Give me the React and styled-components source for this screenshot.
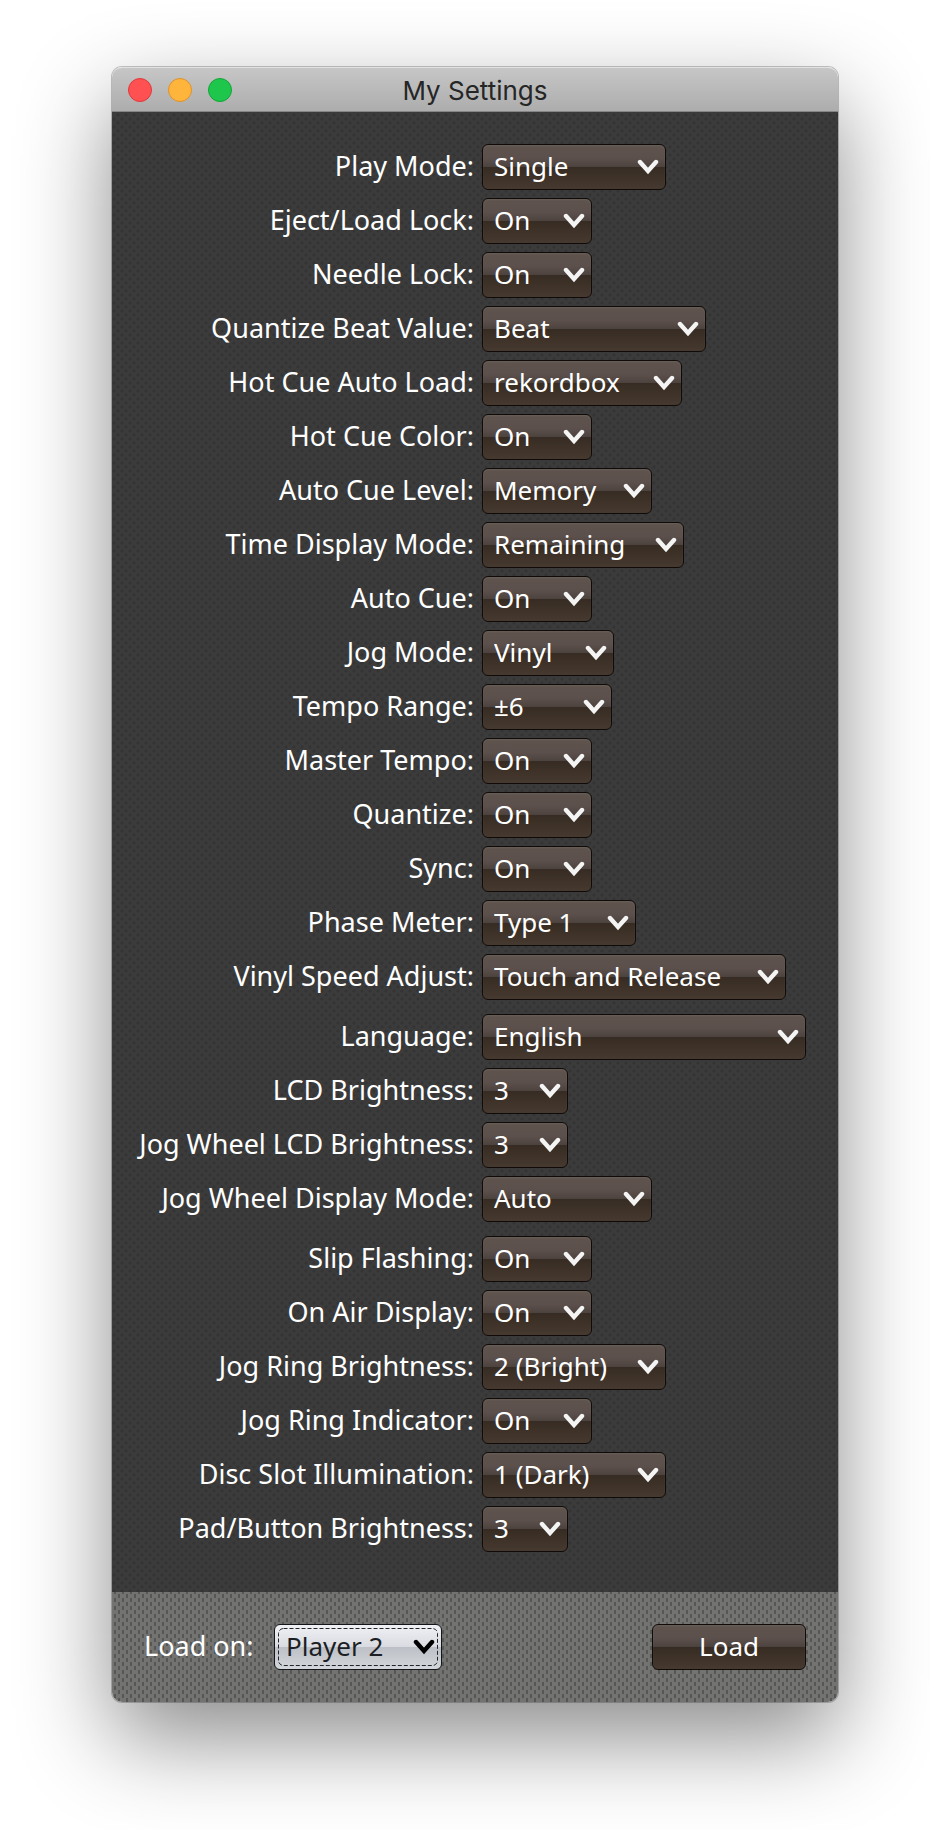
import React, { useId } from "react";
import styled, { createGlobalStyle, css } from "styled-components";

const uiFont = `"Noto Sans", "Open Sans", sans-serif`;

const GlobalStyle = createGlobalStyle`
  *, *::before, *::after { box-sizing: border-box; }
  body { margin: 0; background: #fff; }
`;

const Desktop = styled.main`
  padding: 67px 92px 128px 112px;
  overflow: hidden;
`;

const Window = styled.section`
  border-radius: 10px;
  box-shadow: 0 0 0 1px rgba(0, 0, 0, 0.22), 0 36px 92px rgba(0, 0, 0, 0.46);
`;

const TitleBar = styled.header`
  display: grid;
  grid-template-columns: 1fr auto 1fr;
  align-items: center;
  height: 45px;
  padding: 0 16px;
  border-radius: 10px 10px 0 0;
  border-top: 1px solid #e2e2e2;
  border-bottom: 1px solid #858585;
  background: linear-gradient(#c6c6c6, #adadad);
`;

const Lights = styled.div`
  display: flex;
  gap: 16px;
`;

const Light = styled.button`
  width: 24px;
  height: 24px;
  padding: 0;
  border: 1px solid ${(p) => p.$edge};
  border-radius: 50%;
  background: ${(p) => p.$fill};
`;

const Title = styled.h1`
  margin: 0;
  padding-top: 2px;
  font: 400 26px/32px Inter, sans-serif;
  color: #262626;
`;

const Panel = styled.div`
  display: flex;
  flex-direction: column;
  gap: 14px;
  padding: 32px 32px 40px;
  background:
    radial-gradient(circle at 2px 2px, #343434 1px, transparent 2px) 4px 1px / 8px 8px,
    radial-gradient(circle at 2px 2px, #343434 1px, transparent 2px) 0 5px / 8px 8px,
    #3b3b3b;
`;

const Group = styled.div`
  display: flex;
  flex-direction: column;
  gap: 8px;
`;

const Row = styled.div`
  display: grid;
  grid-template-columns: 330px 1fr;
  column-gap: 8px;
  align-items: center;
`;

const labelText = css`
  padding-bottom: 2px;
  font: 400 27px/32px ${uiFont};
  color: #fff;
  white-space: nowrap;
`;

const Label = styled.label`
  ${labelText}
  text-align: right;
  justify-self: end;
`;

const darkFace = css`
  border: 1px solid #100b08;
  color: #fff;
  background: linear-gradient(#5e534d 0, #5b504b 30%, #4d433e 50%, #372c23 51%, #46392f 100%);
  box-shadow: inset 0 1px 2px rgba(255, 255, 255, 0.08);
`;

const lightFace = css`
  border: 1px solid #14161a;
  color: #1b1f25;
  background: linear-gradient(#f0f1f5 0, #d9dbe0 50%, #bdc0c6 51%, #d3d7db 100%);
`;

const SelectBox = styled.span`
  position: relative;
  display: block;
  width: ${(p) => p.$width}px;
  height: 46px;
`;

const Select = styled.select`
  appearance: none;
  width: 100%;
  height: 46px;
  margin: 0;
  padding: 0 0 2px 11px;
  border-radius: 6px;
  font: 400 26px/32px ${uiFont};
  ${(p) => (p.$light ? lightFace : darkFace)}
`;

const Arrow = styled.svg`
  position: absolute;
  right: 7px;
  top: 15px;
  width: 22px;
  height: 16px;
  pointer-events: none;
`;

const FocusRing = styled.svg`
  position: absolute;
  inset: 0;
  width: 100%;
  height: 100%;
  pointer-events: none;
`;

const Footer = styled.footer`
  display: flex;
  align-items: center;
  padding: 32px;
  border-radius: 0 0 10px 10px;
  background:
    conic-gradient(from 0deg at 2px 4px, transparent 270deg, #565654 0) 6px 2px / 8px 8px,
    conic-gradient(from 0deg at 2px 4px, transparent 270deg, #565654 0) 2px 6px / 8px 8px,
    #737371;
`;

const FooterLabel = styled.label`
  ${labelText}
  width: 130px;
`;

const LoadButton = styled.button`
  width: 154px;
  height: 46px;
  margin-left: auto;
  padding: 0 0 2px;
  border-radius: 6px;
  font: 400 26px/32px ${uiFont};
  ${darkFace}
`;

const groups = [
  [
    ["Play Mode", "Single", 184],
    ["Eject/Load Lock", "On", 110],
    ["Needle Lock", "On", 110],
    ["Quantize Beat Value", "Beat", 224],
    ["Hot Cue Auto Load", "rekordbox", 200],
    ["Hot Cue Color", "On", 110],
    ["Auto Cue Level", "Memory", 170],
    ["Time Display Mode", "Remaining", 202],
    ["Auto Cue", "On", 110],
    ["Jog Mode", "Vinyl", 132],
    ["Tempo Range", "±6", 130],
    ["Master Tempo", "On", 110],
    ["Quantize", "On", 110],
    ["Sync", "On", 110],
    ["Phase Meter", "Type 1", 154],
    ["Vinyl Speed Adjust", "Touch and Release", 304],
  ],
  [
    ["Language", "English", 324],
    ["LCD Brightness", "3", 86],
    ["Jog Wheel LCD Brightness", "3", 86],
    ["Jog Wheel Display Mode", "Auto", 170],
  ],
  [
    ["Slip Flashing", "On", 110],
    ["On Air Display", "On", 110],
    ["Jog Ring Brightness", "2 (Bright)", 184],
    ["Jog Ring Indicator", "On", 110],
    ["Disc Slot Illumination", "1 (Dark)", 184],
    ["Pad/Button Brightness", "3", 86],
  ],
];

function DropDown({ id, value, width, light }) {
  return (
    <SelectBox $width={width}>
      <Select id={id} defaultValue={value} $light={light}>
        <option>{value}</option>
      </Select>
      {light && (
        <FocusRing aria-hidden="true">
          <rect x="4.5" y="4.5" width={width - 9} height="37" rx="5" fill="none" stroke="#22252a" strokeDasharray="4 2" />
        </FocusRing>
      )}
      <Arrow viewBox="0 0 22 16" aria-hidden="true">
        <path d="M3 3 L11 12 L19 3" fill="none" stroke={light ? "#000" : "#f4f4f4"} strokeWidth="4.4" strokeLinecap="round" />
      </Arrow>
    </SelectBox>
  );
}

function Setting({ label, value, width }) {
  const id = useId();
  return (
    <Row>
      <Label htmlFor={id}>{label}:</Label>
      <DropDown id={id} value={value} width={width} />
    </Row>
  );
}

export default function App() {
  return (
    <>
      <GlobalStyle />
      <Desktop>
        <Window>
          <TitleBar>
            <Lights>
              <Light $fill="#ff5052" $edge="#dd3a3d" aria-label="Close" />
              <Light $fill="#ffb43c" $edge="#dd9230" aria-label="Minimize" />
              <Light $fill="#1ec74b" $edge="#12a538" aria-label="Zoom" />
            </Lights>
            <Title>My Settings</Title>
          </TitleBar>
          <Panel>
            {groups.map((rows) => (
              <Group key={rows[0][0]}>
                {rows.map(([label, value, width]) => (
                  <Setting key={label} label={label} value={value} width={width} />
                ))}
              </Group>
            ))}
          </Panel>
          <Footer>
            <FooterLabel htmlFor="player">Load on:</FooterLabel>
            <DropDown id="player" value="Player 2" width={168} light />
            <LoadButton type="button">Load</LoadButton>
          </Footer>
        </Window>
      </Desktop>
    </>
  );
}
